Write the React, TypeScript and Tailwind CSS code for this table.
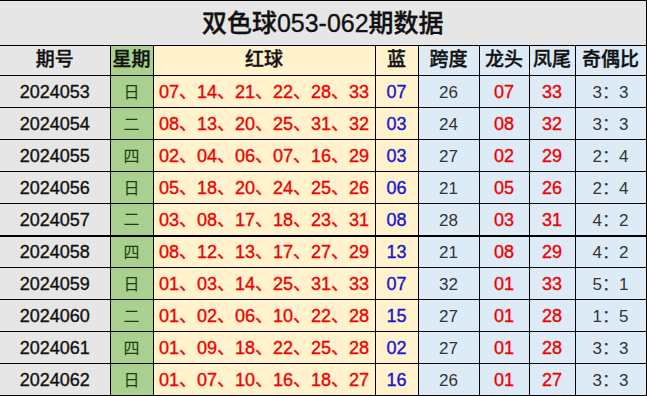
import React from "react";

const rows = [
  ["2024053", "日", "07、14、21、22、28、33", "07", "26", "07", "33", "3：3"],
  ["2024054", "二", "08、13、20、25、31、32", "03", "24", "08", "32", "3：3"],
  ["2024055", "四", "02、04、06、07、16、29", "03", "27", "02", "29", "2：4"],
  ["2024056", "日", "05、18、20、24、25、26", "06", "21", "05", "26", "2：4"],
  ["2024057", "二", "03、08、17、18、23、31", "08", "28", "03", "31", "4：2"],
  ["2024058", "四", "08、12、13、17、27、29", "13", "21", "08", "29", "4：2"],
  ["2024059", "日", "01、03、14、25、31、33", "07", "32", "01", "33", "5：1"],
  ["2024060", "二", "01、02、06、10、22、28", "15", "27", "01", "28", "1：5"],
  ["2024061", "四", "01、09、18、22、25、28", "02", "27", "01", "28", "3：3"],
  ["2024062", "日", "01、07、10、16、18、27", "16", "26", "01", "27", "3：3"],
];

const cjk = "font-['Liberation_Sans','Noto_Sans_CJK_SC',sans-serif]";
const heavy = "[-webkit-text-stroke:0.35px_currentColor]";

export default function App() {
  return (
    <div className={`w-[647px] h-[396px] bg-white overflow-hidden ${cjk}`}>
      <table className="table-fixed border-collapse w-[646px]">
        <colgroup>
          <col className="w-[110px]" />
          <col className="w-[43px]" />
          <col className="w-[222px]" />
          <col className="w-[43px]" />
          <col className="w-[61px]" />
          <col className="w-[50px]" />
          <col className="w-[46px]" />
          <col className="w-[71px]" />
        </colgroup>
        <tbody>
          <tr className="h-[45px]">
            <td
              colSpan={8}
              className={`bg-[#e7e6e6] border-t border-r border-b border-black text-center text-[25px] font-medium text-[#111] pt-[1px] ${heavy}`}
            >
              双色球053-062期数据
            </td>
          </tr>
          <tr className={`h-[30px] text-[19px] font-medium text-[#111] text-center ${heavy}`}>
            <td className="bg-[#e7e6e6] border-r border-b border-black">期号</td>
            <td className="bg-[#a9d08e] border-r border-b border-black">星期</td>
            <td className="bg-[#fff2cc] border-r border-b border-black">红球</td>
            <td className="bg-[#fff2cc] border-r border-b border-black">蓝</td>
            <td className="bg-[#ddebf7] border-r border-b border-black">跨度</td>
            <td className="bg-[#ddebf7] border-r border-b border-black">龙头</td>
            <td className="bg-[#ddebf7] border-r border-b border-black">凤尾</td>
            <td className="bg-[#ddebf7] border-r border-b border-black">奇偶比</td>
          </tr>
          {rows.map((r, i) => {
            const b = i === 4 ? "border-b-2" : "border-b";
            return (
              <tr key={r[0]} className="h-[32px] text-center">
                <td className={`bg-[#e7e6e6] border-r ${b} border-black text-[18px] text-[#111] pt-[2px] ${heavy}`}>{r[0]}</td>
                <td className={`bg-[#a9d08e] border-r ${b} border-black text-[16px] text-[#223a12] pt-[2px]`}>{r[1]}</td>
                <td className={`bg-[#fff2cc] border-r ${b} border-black text-[18px] text-[#f00000] whitespace-nowrap pt-[2px] ${heavy}`}>{r[2]}</td>
                <td className={`bg-[#fff2cc] border-r ${b} border-black text-[18px] text-[#1414d8] pt-[2px] ${heavy}`}>{r[3]}</td>
                <td className={`bg-[#ddebf7] border-r ${b} border-black text-[17px] text-[#333] pt-[2px]`}>{r[4]}</td>
                <td className={`bg-[#ddebf7] border-r ${b} border-black text-[18px] text-[#f00000] pt-[2px] ${heavy}`}>{r[5]}</td>
                <td className={`bg-[#ddebf7] border-r ${b} border-black text-[18px] text-[#f00000] pt-[2px] ${heavy}`}>{r[6]}</td>
                <td className={`bg-[#ddebf7] border-r ${b} border-black text-[17px] text-[#333] pt-[2px]`}>{r[7]}</td>
              </tr>
            );
          })}
        </tbody>
      </table>
    </div>
  );
}
